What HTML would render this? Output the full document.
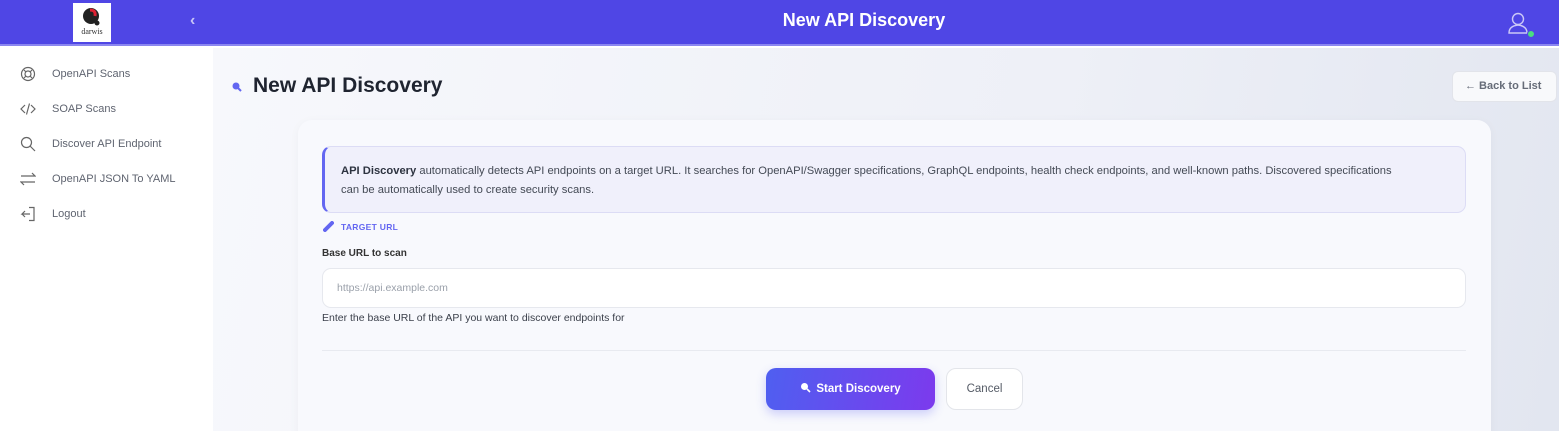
<!DOCTYPE html>
<html><head><meta charset="utf-8"><style>
*{box-sizing:border-box;margin:0;padding:0}
html,body{width:1559px;height:431px;overflow:hidden}
body{font-family:"Liberation Sans",sans-serif;background:#fff;position:relative}
.hdr{position:absolute;left:0;top:0;width:1559px;height:46px;background:#4f46e5;border-bottom:2px solid #8b86f0}
.logo{position:absolute;left:73px;top:3px;width:38px;height:39px;background:#fff}
.hdr .t{position:absolute;left:0;width:1728px;top:10px;text-align:center;color:#fff;font-size:18px;font-weight:bold}
.side{position:absolute;left:0;top:48px;width:213px;height:383px;background:#fff}
.side .it{position:absolute;left:52px;font-size:11px;color:#5f6470}
.side svg{position:absolute;left:20px}
.main{position:absolute;left:213px;top:48px;width:1346px;height:383px;background:linear-gradient(100deg,#f7f8fc 0%,#eef0f7 60%,#e2e6f0 100%)}
.card{position:absolute;left:298px;top:120px;width:1193px;height:330px;background:#f8f9fd;border-radius:14px;box-shadow:0 2px 10px rgba(0,0,0,.04)}
.info{position:absolute;left:322px;top:146px;width:1144px;height:67px;background:#f0f0fb;border:1px solid #dcdcf5;border-left:3px solid #6366f1;border-radius:9px;padding:15px 16px;font-size:11.2px;line-height:19px;color:#444a55}
.lbl{position:absolute;font-size:10px}
.inp{position:absolute;left:322px;top:268px;width:1144px;height:40px;background:#fff;border:1px solid #e6e8ee;border-radius:9px;padding:13px 14px;font-size:10.5px;color:#9aa0aa}
.btn{position:absolute;top:368px;height:42px;border-radius:10px;font-size:11.5px;font-weight:bold;text-align:center;line-height:42px}
</style></head><body>
<div class="hdr">
<div class="logo"><svg width="38" height="39"><circle cx="18" cy="13" r="8" fill="#222"/><path d="M17 7 q6 0 5 6" stroke="#d23" stroke-width="3" fill="none"/><circle cx="24" cy="20" r="2.5" fill="#222"/><text x="19" y="31" font-size="8" text-anchor="middle" fill="#333" font-family="Liberation Serif">darwis</text></svg></div>
<div style="position:absolute;left:190px;top:12px;color:#c8c5f7;font-size:16px;font-weight:bold">‹</div>
<div class="t">New API Discovery</div>
<svg style="position:absolute;left:1508px;top:10px" width="30" height="30"><circle cx="10" cy="9" r="5.5" stroke="#cbc8f7" stroke-width="1.4" fill="none"/><path d="M1 23 q0-7 9-8 q9 1 9 8 z" stroke="#cbc8f7" stroke-width="1.4" fill="none"/><circle cx="23" cy="24" r="3.5" fill="#4ade80" stroke="#4f46e5" stroke-width="1"/></svg>
</div>
<div class="side">
<svg style="top:18px" width="16" height="16" fill="none" stroke="#666" stroke-width="1.2"><circle cx="8" cy="8" r="6.5"/><circle cx="8" cy="8" r="3"/><path d="M4 4l2 2M12 4l-2 2M4 12l2-2M12 12l-2-2"/></svg>
<div class="it" style="top:20px">OpenAPI Scans</div>
<svg style="top:53px" width="16" height="16" fill="none" stroke="#666" stroke-width="1.2"><path d="M5 4L1 8l4 4M11 4l4 4-4 4M9.5 2.5l-3 11"/></svg>
<div class="it" style="top:55px">SOAP Scans</div>
<svg style="top:88px" width="16" height="16" fill="none" stroke="#666" stroke-width="1.2"><circle cx="6.5" cy="6.5" r="5"/><path d="M10 10l5 5"/></svg>
<div class="it" style="top:90px">Discover API Endpoint</div>
<svg style="top:123px" width="16" height="16" fill="none" stroke="#666" stroke-width="1.2"><path d="M1 5h14l-3-3M15 11H1l3 3"/></svg>
<div class="it" style="top:125px">OpenAPI JSON To YAML</div>
<svg style="top:158px" width="16" height="16" fill="none" stroke="#666" stroke-width="1.2"><path d="M9 1.5h5v13H9M10 8H2l3-3M2 8l3 3"/></svg>
<div class="it" style="top:160px">Logout</div>
</div>
<div class="main"></div>
<svg style="position:absolute;left:231px;top:81px" width="12" height="12"><circle cx="5" cy="5" r="3.5" fill="#6366f1"/><path d="M7 7l3 3" stroke="#6366f1" stroke-width="2"/></svg>
<div style="position:absolute;left:253px;top:74px;font-size:21px;font-weight:bold;color:#1f2430">New API Discovery</div>
<div style="position:absolute;left:1452px;top:71px;width:105px;height:31px;background:#f8f9fb;border:1px solid #e2e4ea;border-radius:6px;font-size:11px;font-weight:bold;color:#666c78;line-height:29px;padding-left:12px">← Back to List</div>
<div class="card"></div>
<div class="info"><b style="color:#2d3340">API Discovery</b> automatically detects API endpoints on a target URL. It searches for OpenAPI/Swagger specifications, GraphQL endpoints, health check endpoints, and well-known paths. Discovered specifications<br>can be automatically used to create security scans.</div>
<svg style="position:absolute;left:323px;top:221px" width="11" height="11"><path d="M2 9L9 2" stroke="#6366f1" stroke-width="4" stroke-linecap="round"/></svg>
<div class="lbl" style="left:341px;top:222px;font-size:8.5px;font-weight:bold;color:#6366f1;letter-spacing:.3px">TARGET URL</div>
<div class="lbl" style="left:322px;top:248px;font-weight:bold;color:#333">Base URL to scan</div>
<div class="inp">https://api.example.com</div>
<div class="lbl" style="left:322px;top:312px;font-size:10.5px;color:#3a3f4a">Enter the base URL of the API you want to discover endpoints for</div>
<div style="position:absolute;left:322px;top:350px;width:1144px;height:1px;background:#e8eaf0"></div>
<div class="btn" style="left:766px;width:169px;background:linear-gradient(100deg,#4f5ff0,#7c3aed);color:#fff;box-shadow:0 4px 10px rgba(99,102,241,.3)"><svg width="11" height="11" style="vertical-align:-1px;margin-right:5px"><circle cx="4.5" cy="4.5" r="3.5" fill="#fff"/><path d="M7 7l3 3" stroke="#fff" stroke-width="1.6"/></svg>Start Discovery</div>
<div class="btn" style="left:946px;width:77px;background:#fff;border:1px solid #e3e5ea;color:#555b66;font-weight:normal;line-height:40px">Cancel</div>
</body></html>
